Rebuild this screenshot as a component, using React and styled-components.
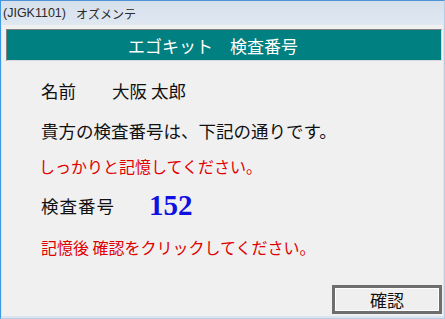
import React from 'react';
import styled, { createGlobalStyle } from 'styled-components';

const GlobalStyle = createGlobalStyle`
  html, body {
    margin: 0;
    padding: 0;
    background: #f0f0f0;
  }
  body {
    font-family: "Noto Sans CJK JP", "Noto Sans", sans-serif;
  }
`;

const Window = styled.div`
  width: 445px;
  height: 319px;
  box-sizing: border-box;
  display: flex;
  flex-direction: column;
  background: #dbe4ef;
  border-top: 1px solid #4d93d8;
  border-left: 1px solid #3d9ae0;
  border-right: 1px solid #b9cde2;
  border-bottom: 1px solid #b9cde2;
`;

const TitleBar = styled.div`
  height: 24px;
  display: flex;
  align-items: center;
  gap: 10px;
  padding-left: 2px;
  font-size: 12px;
  color: #2a2a2a;
  background: linear-gradient(#d6e0ec, #dfe7f1);
`;

const TitleCode = styled.span`
  font-family: "Liberation Sans", Arial, sans-serif;
  font-size: 12.5px;
`;

const Client = styled.div`
  flex: 1;
  margin: 0 1px 2px 1px;
  background: #f0f0f0;
  display: flex;
  flex-direction: column;
  padding: 4px 1px 0 4px;
`;

const Header = styled.div`
  height: 32px;
  box-sizing: border-box;
  background: #008080;
  border-top: 1px solid #808080;
  border-left: 1px solid #808080;
  border-right: 1px solid #d8d8d8;
  border-bottom: 1px solid #d8d8d8;
  color: #ffffff;
  font-size: 17px;
  display: flex;
  align-items: center;
  justify-content: center;
  padding-right: 22px;
  white-space: pre;
`;

const Content = styled.div`
  display: flex;
  flex-direction: column;
  padding-left: ${p => p.$left}px;
  padding-top: 9px;
`;

const Line = styled.div`
  height: ${p => p.$h}px;
  display: flex;
  align-items: center;
  font-size: ${p => p.$size || 17.5}px;
  color: ${p => p.$color || '#111111'};
  margin-left: ${p => p.$shift || 0}px;
  white-space: pre;
`;

const Label = styled.span`
  width: ${p => p.$w}px;
  letter-spacing: ${p => p.$ls || 0}px;
`;

const Number = styled.span`
  font-family: "Liberation Serif", "DejaVu Serif", serif;
  font-weight: bold;
  font-size: 29px;
  color: #1010e0;
`;

const Footer = styled.div`
  display: flex;
  justify-content: flex-end;
  margin-top: 19px;
`;

const Button = styled.button`
  width: 110px;
  height: 29px;
  box-sizing: border-box;
  border: 3px solid #6e6e6e;
  outline: 1px solid #ffffff;
  outline-offset: -4px;
  background: #efefef;
  font-family: "Noto Sans CJK JP", sans-serif;
  font-size: 17px;
  color: #111111;
  padding: 0;
  display: flex;
  align-items: center;
  justify-content: center;
`;

export default function App() {
  return (
    <>
      <GlobalStyle />
      <Window>
        <TitleBar>
          <TitleCode>(JIGK1101)</TitleCode>
          <span>オズメンテ</span>
        </TitleBar>
        <Client>
          <Header>エゴキット　検査番号</Header>
          <Content $left={35}>
            <Line $h={40}>
              <Label $w={71}>名前</Label>
              <span>大阪 太郎</span>
            </Line>
            <Line $h={40}>貴方の検査番号は、下記の通りです。</Line>
            <Line $h={32} $size={16} $color="#e00000" $shift={-2}>しっかりと記憶してください。</Line>
            <Line $h={46}>
              <Label $w={108} $ls={1}>検査番号</Label>
              <Number>152</Number>
            </Line>
            <Line $h={38} $size={16} $color="#e00000">記憶後 確認をクリックしてください。</Line>
          </Content>
          <Footer>
            <Button>確認</Button>
          </Footer>
        </Client>
      </Window>
    </>
  );
}
